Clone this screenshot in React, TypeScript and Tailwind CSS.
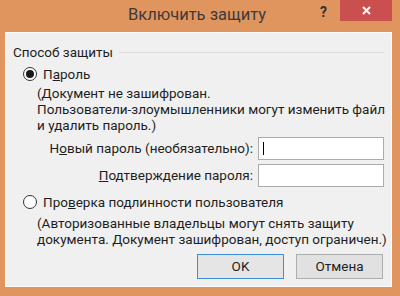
function Radio({ checked }: { checked: boolean }) {
  return (
    <span className="flex h-[14px] w-[14px] shrink-0 items-center justify-center rounded-full border border-[#333] bg-white">
      {checked && <span className="h-[8px] w-[8px] rounded-full bg-[#1a1a1a]" />}
    </span>
  )
}

export default function App() {
  return (
    <div
      className="flex h-[296px] w-[400px] flex-col bg-[#e0955f] text-[13.5px] text-[#1e1e1e]"
      style={{ fontFamily: 'Roboto, "Noto Sans", sans-serif' }}
    >
      {/* title bar */}
      <div className="relative flex h-[32px] shrink-0 items-center justify-center">
        <span className="pb-[1px] pr-[6px] text-[16.5px] text-[#3b3b3b]">Включить защиту</span>
        <span className="absolute left-[320px] top-[2px] text-[14px] font-bold text-[#333]">?</span>
        <div className="absolute left-[340px] top-0 flex h-[21px] w-[52px] items-center justify-center bg-[#c9504e]">
          <svg width="9" height="9" viewBox="0 0 9 9">
            <path d="M1 1L8 8M8 1L1 8" stroke="#fff" strokeWidth="2" />
          </svg>
        </div>
      </div>

      {/* client area */}
      <div className="ml-[5px] flex h-[255px] w-[387px] flex-col border border-[#fbfbfb] bg-[#f0f0f0] px-[7px] pt-[11px]">
        <div className="flex h-[16px] items-center gap-[6px]">
          <span>Способ защиты</span>
          <span className="h-px flex-1 bg-[#dcdcdc]" />
        </div>

        <label className="ml-[10px] mt-[6px] flex h-[16px] items-center gap-[6px]">
          <Radio checked />
          <span>
            П<span className="underline">а</span>роль
          </span>
        </label>
        <div className="ml-[24px] mt-[3px] whitespace-nowrap leading-[16px]">
          <div>(Документ не зашифрован.</div>
          <div>Пользователи-злоумышленники могут изменить файл</div>
          <div>и удалить пароль.)</div>
        </div>

        <div className="mt-[4px] flex h-[23px] items-center justify-end gap-[5px]">
          <span>
            Н<span className="underline">о</span>вый пароль (необязательно):
          </span>
          <div className="flex h-[23px] w-[126px] items-center border border-[#ababab] bg-white pl-[4px]">
            <span className="h-[13px] w-px bg-black" />
          </div>
        </div>
        <div className="mt-[4px] flex h-[23px] items-center justify-end gap-[5px]">
          <span>
            <span className="underline">П</span>одтверждение пароля:
          </span>
          <div className="h-[23px] w-[126px] border border-[#ababab] bg-white" />
        </div>

        <label className="ml-[10px] mt-[7px] flex h-[16px] items-center gap-[6px]">
          <Radio checked={false} />
          <span>
            Про<span className="underline">в</span>ерка подлинности пользователя
          </span>
        </label>
        <div className="ml-[24px] mt-[5px] whitespace-nowrap leading-[16px]">
          <div>(Авторизованные владельцы могут снять защиту</div>
          <div>документа. Документ зашифрован, доступ ограничен.)</div>
        </div>

        <div className="mt-[7px] flex justify-end gap-[12px] pr-[1px]">
          <button className="h-[25px] w-[87px] border border-[#3c8fd6] bg-[#e5e5e5] text-[#1e1e1e]">OK</button>
          <button className="h-[25px] w-[87px] border border-[#adadad] bg-[#e1e1e1] text-[#1e1e1e]">Отмена</button>
        </div>
      </div>
    </div>
  )
}
